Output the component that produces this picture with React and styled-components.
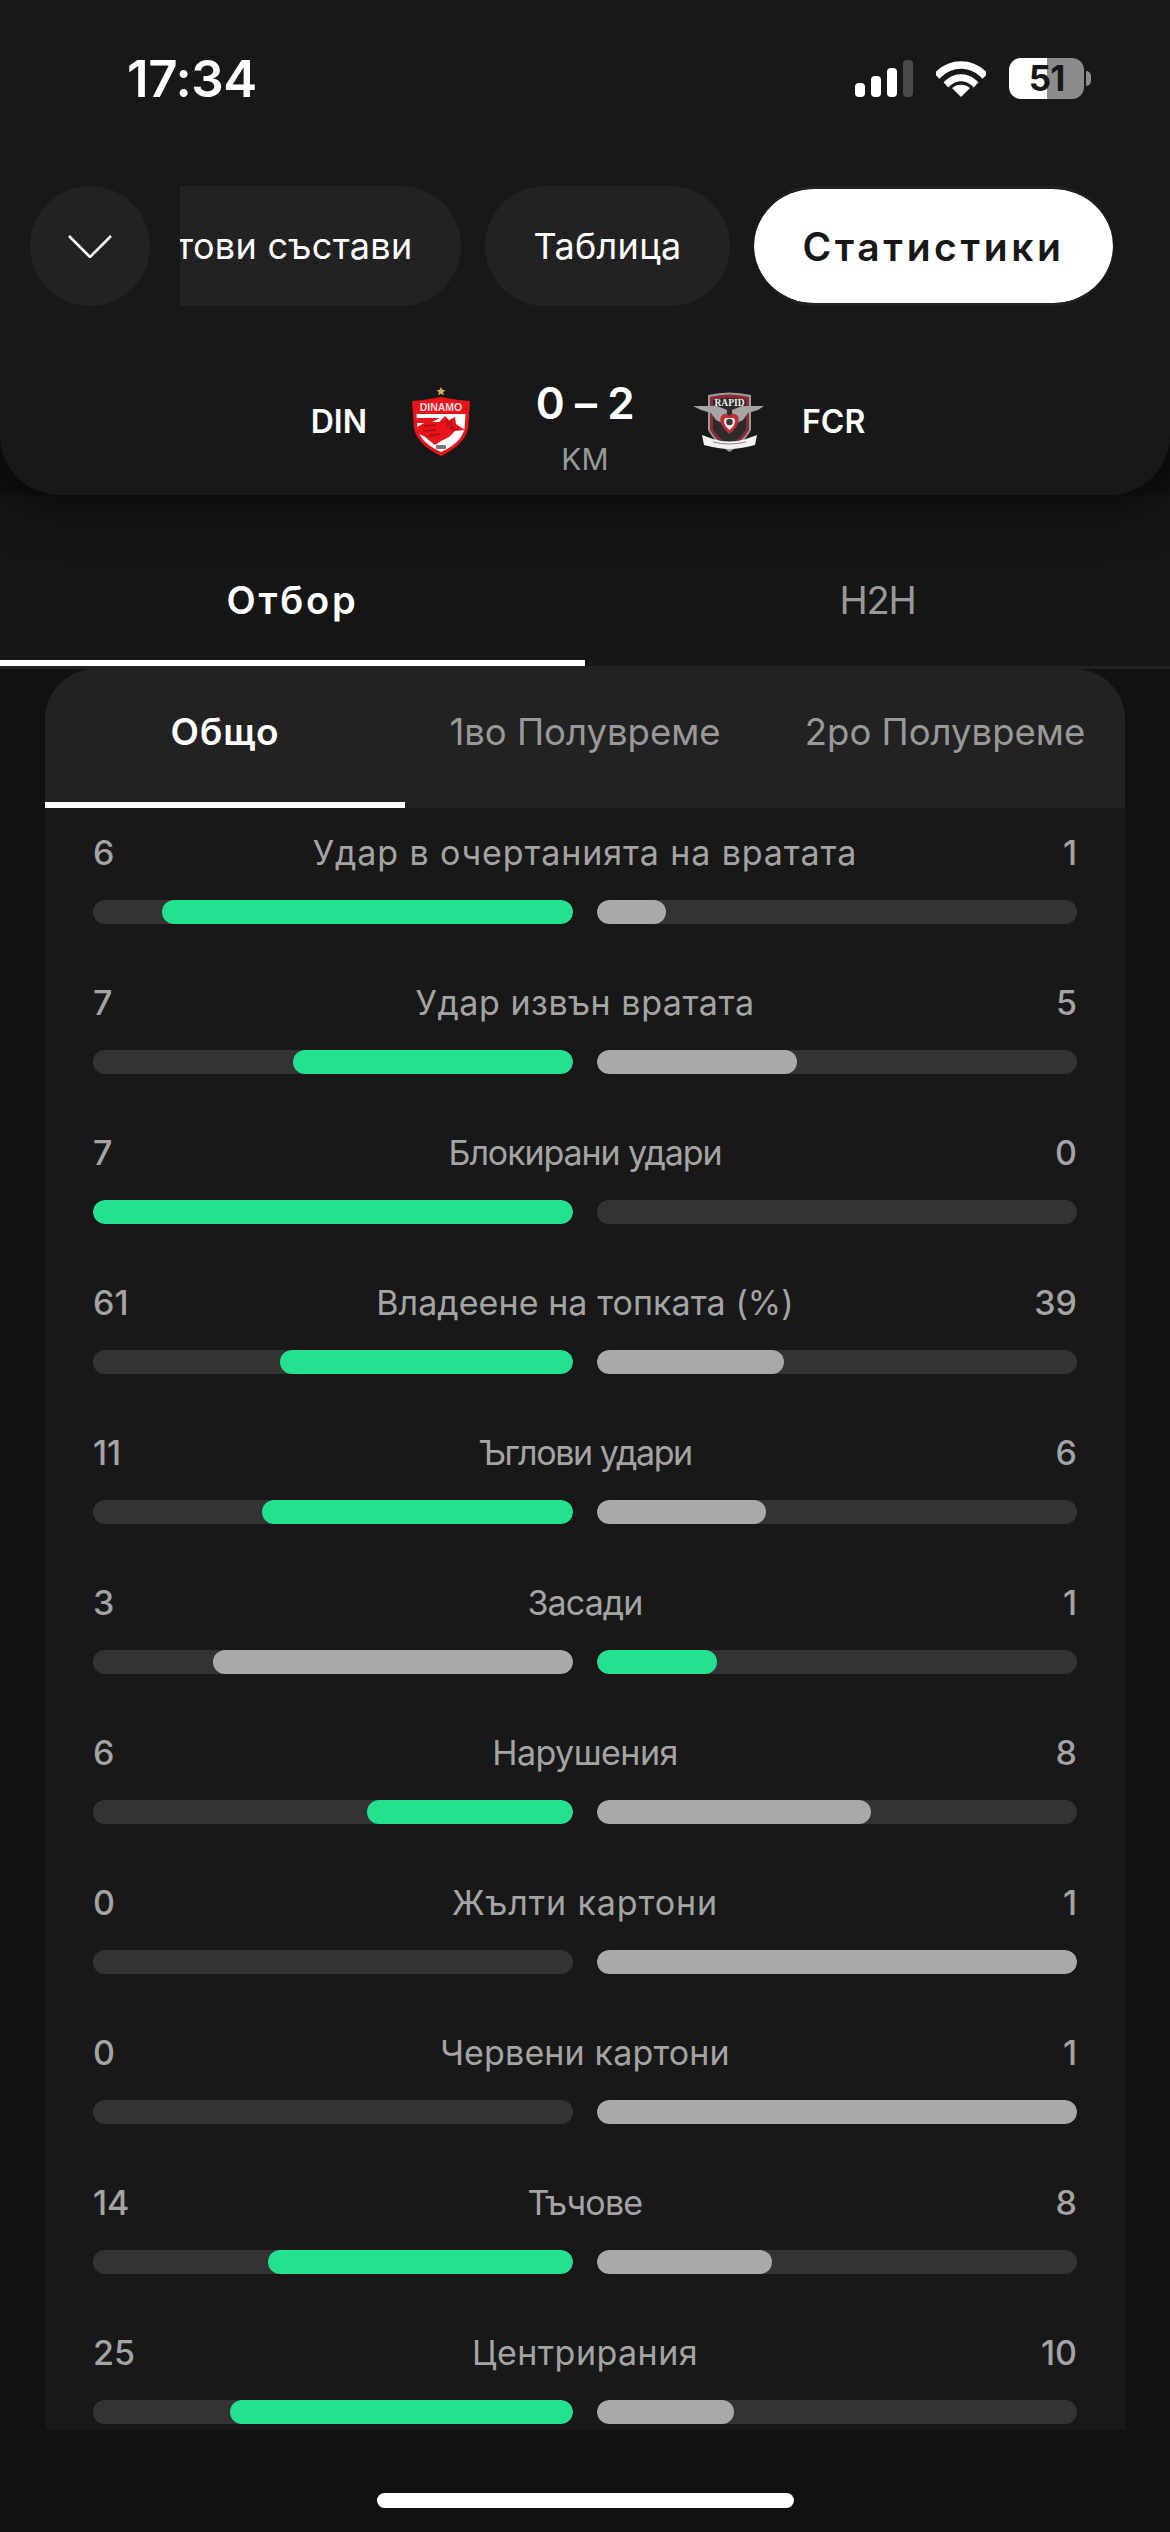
import React from "react";
import styled, { createGlobalStyle } from "styled-components";

const Global = createGlobalStyle`
  html, body { margin: 0; padding: 0; background: #111; }
  body { font-family: Inter, "Noto Sans", sans-serif; color: #fff; }
  * { box-sizing: border-box; }
`;

const Page = styled.div`
  width: 1170px;
  height: 2532px;
  overflow: hidden;
  background: #111;
`;

const Header = styled.header`
  position: relative;
  z-index: 2;
  height: 495px;
  background: #181818;
  border-radius: 0 0 60px 60px;
  box-shadow: 0 0 60px rgba(0, 0, 0, 0.85);
`;

const StatusBar = styled.div`
  height: 156px;
  margin-bottom: 30px;
  padding: 0 79px 0 127px;
  display: flex;
  align-items: center;
  justify-content: space-between;
`;

const Time = styled.div`
  font-size: 51px;
  font-weight: 600;
  letter-spacing: -0.4px;
  line-height: 1;
`;

const StatusIcons = styled.div`
  display: flex;
  align-items: center;
  gap: 23px;
`;

const Battery = styled.div`
  position: relative;
  width: 75px;
  height: 41px;
  border-radius: 12px;
  background: linear-gradient(90deg, #fff 0 38px, #8c8c8c 38px);
  color: #181818;
  font-size: 35px;
  font-weight: 700;
  letter-spacing: -1px;
  line-height: 41px;
  text-align: center;
  margin-right: 7px;
  &::after {
    content: "";
    position: absolute;
    right: -7px;
    top: 13px;
    width: 5px;
    height: 15px;
    border-radius: 0 8px 8px 0;
    background: #8c8c8c;
  }
`;

const NavRow = styled.div`
  display: flex;
  align-items: stretch;
  height: 120px;
  padding-left: 30px;
  gap: 30px;
`;

const RoundButton = styled.div`
  flex: none;
  width: 120px;
  height: 120px;
  border-radius: 50%;
  background: #222;
  display: flex;
  align-items: center;
  justify-content: center;
`;

const Scroller = styled.div`
  flex: 1;
  min-width: 0;
  overflow: hidden;
  display: flex;
  justify-content: flex-end;
  gap: 24px;
  padding-right: 57px;
`;

const Pill = styled.div`
  flex: none;
  height: 120px;
  padding: 0 48.500px;
  border-radius: 60px;
  display: flex;
  align-items: center;
  white-space: nowrap;
  font-size: ${(p) => (p.$active ? 39 : 36)}px;
  letter-spacing: ${(p) => (p.$active ? 3.6 : 0.3)}px;
  font-weight: ${(p) => (p.$active ? 600 : 400)};
  background: ${(p) => (p.$active ? "#fff" : "#222")};
  background-clip: padding-box;
  color: ${(p) => (p.$active ? "#181818" : "#fff")};
  border-style: solid;
  border-color: #222;
  border-width: ${(p) => (p.$active ? "3px 0" : "0")};
`;

const MatchRow = styled.div`
  height: 189px;
  display: grid;
  grid-template-columns: 1fr 210px 1fr;
`;

const Team = styled.div`
  display: flex;
  align-items: center;
  padding-top: 42px;
  height: 189px;
  justify-content: ${(p) => (p.$right ? "flex-start" : "flex-end")};
  gap: ${(p) => (p.$right ? 38 : 45)}px;
  padding-left: ${(p) => (p.$right ? 3 : 0)}px;
  padding-right: ${(p) => (p.$right ? 0 : 10)}px;
`;

const TeamCode = styled.span`
  font-size: 32px;
  font-weight: 600;
`;

const ScoreBlock = styled.div`
  display: flex;
  flex-direction: column;
  align-items: center;
  padding-top: 75px;
`;

const Score = styled.div`
  font-size: 44px;
  line-height: 44px;
  font-weight: 600;
  letter-spacing: -0.4px;
`;

const Period = styled.div`
  margin-top: 16px;
  font-size: 30px;
  line-height: 36px;
  color: #999;
`;

const TabBar = styled.nav`
  display: grid;
  grid-template-columns: 1fr 1fr;
  height: 174px;
  background: #161616;
  border-bottom: 3px solid #222;
`;

const Tab = styled.div`
  height: 171px;
  padding-top: 44px;
  display: flex;
  align-items: center;
  justify-content: center;
  font-size: 38px;
  letter-spacing: ${(p) => (p.$active ? 2.8 : -1.3)}px;
  font-weight: ${(p) => (p.$active ? 600 : 400)};
  color: ${(p) => (p.$active ? "#fff" : "#999")};
  border-bottom: 6px solid ${(p) => (p.$active ? "#fff" : "transparent")};
`;

const Card = styled.section`
  width: 1080px;
  height: 1761px;
  margin: 0 auto;
  overflow: hidden;
  background: #181818;
  border-radius: 50px 50px 0 0;
`;

const SubTabs = styled.div`
  display: grid;
  grid-template-columns: 360px 1fr 360px;
  height: 139px;
  background: #222;
`;

const SubTab = styled.div`
  display: flex;
  align-items: center;
  justify-content: center;
  padding-bottom: 8px;
  white-space: nowrap;
  font-size: ${(p) => (p.$active ? 37 : 36.5)}px;
  letter-spacing: ${(p) => (p.$active ? 0.9 : 0)}px;
  font-weight: ${(p) => (p.$active ? 600 : 400)};
  color: ${(p) => (p.$active ? "#fff" : "#999")};
  border-bottom: 6px solid ${(p) => (p.$active ? "#fff" : "transparent")};
`;

const Rows = styled.div`
  padding: 24px 48px 0;
`;

const Row = styled.div`
  height: 150px;
`;

const Labels = styled.div`
  display: grid;
  grid-template-columns: 1fr auto 1fr;
  align-items: center;
  height: 30px;
  margin-bottom: 38px;
  font-size: 34px;
  color: #a4a4a4;
`;

const Num = styled.span`
  font-weight: 500;
  text-align: ${(p) => (p.$right ? "right" : "left")};
`;

const Name = styled.span`
  font-weight: 400;
  letter-spacing: ${(p) => p.$track}px;
`;

const Bars = styled.div`
  display: grid;
  grid-template-columns: 480px 480px;
  gap: 24px;
`;

const Track = styled.div`
  height: 24px;
  border-radius: 12px;
  background: #333;
  display: flex;
  overflow: hidden;
  justify-content: ${(p) => (p.$end ? "flex-end" : "flex-start")};
`;

const Fill = styled.div`
  height: 100%;
  border-radius: 12px;
  background: ${(p) => (p.$win ? "#24e18f" : "#a9a9a9")};
`;

const HomeBar = styled.div`
  width: 417px;
  height: 15px;
  border-radius: 8px;
  background: #fff;
  margin: 63px auto 0;
`;

const stats = [
  { name: "Удар в очертанията на вратата", a: 6, b: 1, track: 0.9 },
  { name: "Удар извън вратата", a: 7, b: 5, track: 0.55 },
  { name: "Блокирани удари", a: 7, b: 0, track: -1.1 },
  { name: "Владеене на топката (%)", a: 61, b: 39, track: 0.07 },
  { name: "Ъглови удари", a: 11, b: 6, track: -1.4 },
  { name: "Засади", a: 3, b: 1, track: -0.9, swap: true },
  { name: "Нарушения", a: 6, b: 8, track: -0.55 },
  { name: "Жълти картони", a: 0, b: 1, track: 0.9 },
  { name: "Червени картони", a: 0, b: 1, track: 0.15 },
  { name: "Тъчове", a: 14, b: 8, track: -0.75 },
  { name: "Центрирания", a: 25, b: 10, track: 0.45 },
];

const Signal = () => (
  <svg width="58" height="37" viewBox="0 0 58 37">
    <rect x="0" y="23" width="10" height="14" rx="4" fill="#fff" />
    <rect x="16" y="16" width="10" height="21" rx="4" fill="#fff" />
    <rect x="32" y="8" width="10" height="29" rx="4" fill="#fff" />
    <rect x="48" y="0" width="10" height="37" rx="4" fill="#4b4b4b" />
  </svg>
);

const Wifi = () => (
  <svg width="50" height="37" viewBox="0 0 50 37" fill="none">
    <path d="M3.5 13.5C15.500 2 34.500 2 46.500 13.500" stroke="#fff" strokeWidth="7.500" strokeLinecap="square" />
    <path d="M12.500 22.500C19.500 16 30.500 16 37.500 22.500" stroke="#fff" strokeWidth="7" strokeLinecap="square" />
    <path d="M25 37L16 28C21 23.500 29 23.500 34 28Z" fill="#fff" />
  </svg>
);

const Chevron = () => (
  <svg width="44" height="23" viewBox="0 0 44 23" fill="none">
    <path d="M1 1L22 22L43 1" stroke="#fff" strokeWidth="2.600" />
  </svg>
);

const DinamoLogo = () => (
  <svg width="58" height="70" viewBox="0 0 58 70">
    <path d="M29 0l1.400 2.800 3 .4-2.200 2 .6 3L29 6.800l-2.800 1.400.6-3-2.200-2 3-.4z" fill="#cfae55" />
    <path d="M0 14Q14 13 29 10 44 13 58 14L56 42Q52 58 29 69 6 58 2 42Z" fill="#e8141c" />
    <text x="29" y="24" textAnchor="middle" fontFamily="Liberation Sans, sans-serif" fontSize="10.500" fontWeight="700" fill="#f3dcdc">DINAMO</text>
    <path d="M4.500 27H53.500L52.500 42Q49 56 29 65 9 56 5.500 42Z" fill="#fff" />
    <path d="M4.500 31H28L18 36H5Z" fill="#e8141c" />
    <path d="M5 40L14 35L27 35L33 29L37 33L43 30L44 37L53 43L43 44L37 50L29 54L23 58L13 50L6 46Z" fill="#e8141c" />
    <path d="M12 39L24 38M11 44L24 43M17 49L28 47" stroke="#a80e14" strokeWidth="1.500" fill="none" />
    <path d="M34 31l3 4 3-2 1 6 6 4-8 0-5-5z" fill="#c40f16" />
    <rect x="24" y="58" width="10" height="4" rx="1" fill="#777" />
  </svg>
);

const RapidLogo = () => (
  <svg width="71" height="60" viewBox="0 0 71 60">
    <path d="M15 3Q36-2 58 3V38Q50 52 36.500 60 23 52 15 38Z" fill="#9a9a9a" />
    <path d="M17 5Q36 0 56 5V38Q49 50 36.500 57 24 50 17 38Z" fill="#8a2a32" />
    <path d="M20 8Q36 4 53 8V37Q47 47 36.500 53 26 47 20 37Z" fill="#2c2a2b" />
    <text x="36.500" y="14" textAnchor="middle" fontFamily="Liberation Serif, serif" fontSize="9.500" fontWeight="700" fill="#eee">RAPID</text>
    <path d="M0 14L24 14L34 18L33 33L23 28L18 21L8 18Z" fill="#a5a5a5" />
    <path d="M71 14L49 14L39 18L40 33L50 28L55 21L65 18Z" fill="#a5a5a5" />
    <path d="M36.500 42C26 34 25 24 31 22Q34.500 21 36.500 24 38.500 21 42 22C48 24 47 34 36.500 42Z" fill="#b8323a" />
    <path d="M36.500 38C30 33 30 27 33 26H40C43 27 43 33 36.500 38Z" fill="#f0e6e6" />
    <circle cx="36.500" cy="30" r="3.300" fill="#3a3a3a" />
    <path d="M9 43L20 47Q36 52 53 47L64 43L62 53Q47 57 36.500 57T11 53Z" fill="#f1f1f1" />
    <path d="M20 50Q36 54 53 50" fill="none" stroke="#888" strokeWidth="1" />
  </svg>
);

export default function App() {
  return (
    <Page lang="bg">
      <Global />
      <Header>
        <StatusBar>
          <Time>17:34</Time>
          <StatusIcons>
            <Signal />
            <Wifi />
            <Battery>51</Battery>
          </StatusIcons>
        </StatusBar>
        <NavRow>
          <RoundButton>
            <Chevron />
          </RoundButton>
          <Scroller>
            <Pill>Стартови състави</Pill>
            <Pill>Таблица</Pill>
            <Pill $active>Статистики</Pill>
          </Scroller>
        </NavRow>
        <MatchRow>
          <Team>
            <TeamCode>DIN</TeamCode>
            <DinamoLogo />
          </Team>
          <ScoreBlock>
            <Score>0 – 2</Score>
            <Period>KM</Period>
          </ScoreBlock>
          <Team $right>
            <RapidLogo />
            <TeamCode>FCR</TeamCode>
          </Team>
        </MatchRow>
      </Header>
      <TabBar>
        <Tab $active>Отбор</Tab>
        <Tab>H2H</Tab>
      </TabBar>
      <Card>
        <SubTabs>
          <SubTab $active>Общо</SubTab>
          <SubTab>1во Полувреме</SubTab>
          <SubTab>2ро Полувреме</SubTab>
        </SubTabs>
        <Rows>
          {stats.map(({ name, a, b, track, swap }) => {
            const total = a + b || 1;
            return (
              <Row key={name}>
                <Labels>
                  <Num>{a}</Num>
                  <Name $track={track}>{name}</Name>
                  <Num $right>{b}</Num>
                </Labels>
                <Bars>
                  <Track $end>
                    <Fill $win={!swap} style={{ width: `${(a / total) * 100}%` }} />
                  </Track>
                  <Track>
                    <Fill $win={!!swap} style={{ width: `${(b / total) * 100}%` }} />
                  </Track>
                </Bars>
              </Row>
            );
          })}
        </Rows>
      </Card>
      <HomeBar />
    </Page>
  );
}
